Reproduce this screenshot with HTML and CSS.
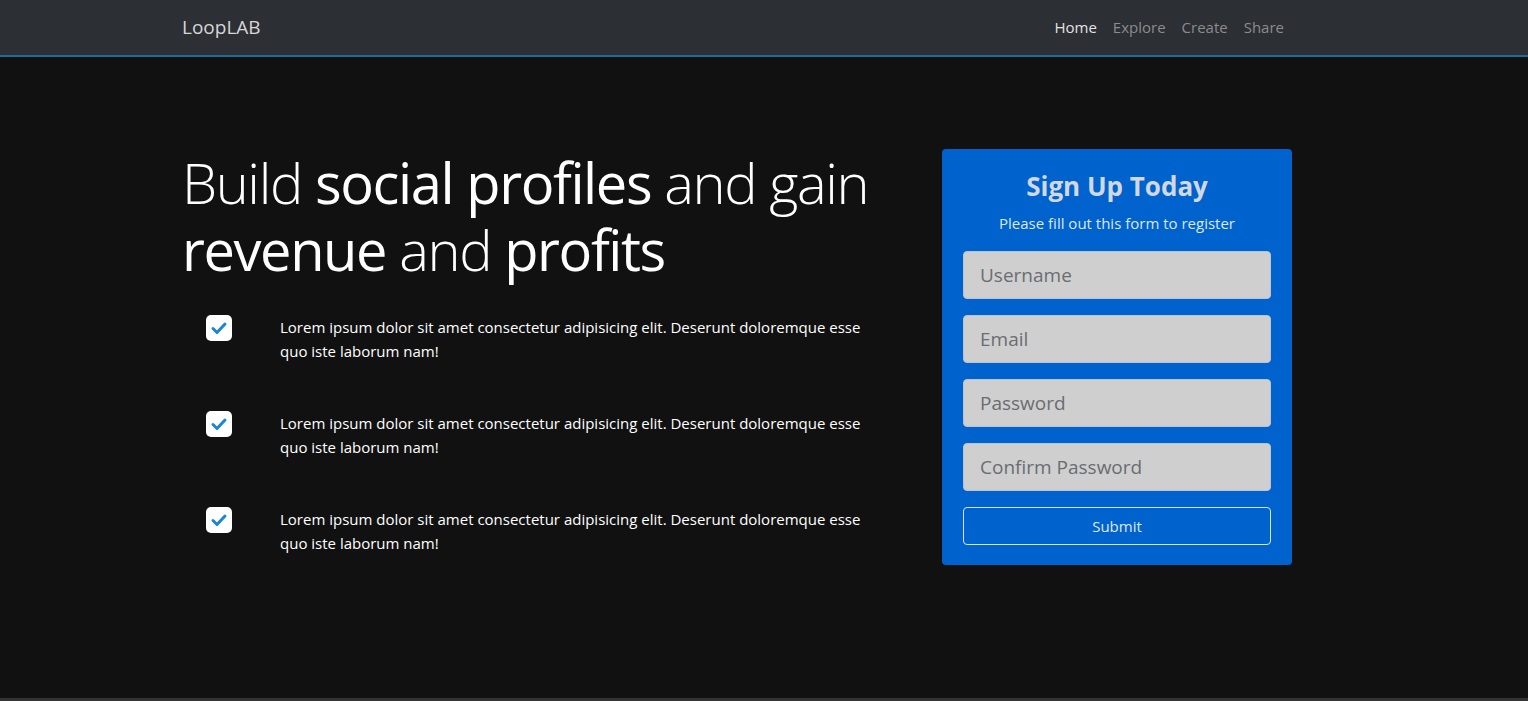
FILE: index.html
```html
<!DOCTYPE html>
<html lang="en">

<head>
  <title>LoopLAB</title>
  <meta charset="utf-8">
  <link rel="stylesheet" href="styles.css">
</head>

<body>
  <nav class="navbar">
    <div class="container nav-inner">
      <a class="brand" href="#">LoopLAB</a>
      <ul class="nav-links">
        <li><a class="active" href="#">Home</a></li>
        <li><a href="#">Explore</a></li>
        <li><a href="#">Create</a></li>
        <li><a href="#">Share</a></li>
      </ul>
    </div>
  </nav>

  <section class="home">
    <div class="container row">
      <div class="intro">
        <h1 class="display">Build <strong>social profiles</strong> and gain <strong>revenue</strong> and <strong>profits</strong></h1>
        <ul class="checks">
          <li>
            <span class="check"><svg width="26" height="26" viewBox="0 0 26 26"><rect width="26" height="26" rx="5" fill="#fff"/><path d="M7 13.5l4 4 8-8.5" fill="none" stroke="#1a87cf" stroke-width="3" stroke-linecap="round" stroke-linejoin="round"/></svg></span>
            <p>Lorem ipsum dolor sit amet consectetur adipisicing elit. Deserunt doloremque esse quo iste laborum nam!</p>
          </li>
          <li>
            <span class="check"><svg width="26" height="26" viewBox="0 0 26 26"><rect width="26" height="26" rx="5" fill="#fff"/><path d="M7 13.5l4 4 8-8.5" fill="none" stroke="#1a87cf" stroke-width="3" stroke-linecap="round" stroke-linejoin="round"/></svg></span>
            <p>Lorem ipsum dolor sit amet consectetur adipisicing elit. Deserunt doloremque esse quo iste laborum nam!</p>
          </li>
          <li>
            <span class="check"><svg width="26" height="26" viewBox="0 0 26 26"><rect width="26" height="26" rx="5" fill="#fff"/><path d="M7 13.5l4 4 8-8.5" fill="none" stroke="#1a87cf" stroke-width="3" stroke-linecap="round" stroke-linejoin="round"/></svg></span>
            <p>Lorem ipsum dolor sit amet consectetur adipisicing elit. Deserunt doloremque esse quo iste laborum nam!</p>
          </li>
        </ul>
      </div>

      <div class="card">
        <h3>Sign Up Today</h3>
        <p>Please fill out this form to register</p>
        <form>
          <input type="text" placeholder="Username">
          <input type="email" placeholder="Email">
          <input type="password" placeholder="Password">
          <input type="password" placeholder="Confirm Password">
          <button type="button">Submit</button>
        </form>
      </div>
    </div>
  </section>

  <footer class="footer"></footer>
</body>

</html>
```

FILE: styles.css
```css
* {
  box-sizing: border-box;
}

body {
  margin: 0;
  background-color: #111;
  color: #fff;
  font-family: "Open Sans", "Noto Sans", sans-serif;
  font-size: 16px;
  line-height: 1.5;
}

.container {
  width: 1110px;
  margin-left: 182px;
}

/* top bar */
.navbar {
  height: 57px;
  background-color: #2c2f33;
  border-bottom: 2px solid #1d6b98;
}

.nav-inner {
  height: 55px;
  display: flex;
  align-items: center;
  justify-content: space-between;
}

.brand {
  font-size: 19px;
  color: #d6d6d6;
  text-decoration: none;
}

.nav-links {
  display: flex;
  list-style: none;
  margin: 0;
  padding: 0;
}

.nav-links a {
  display: block;
  padding: 0 8px;
  font-size: 15px;
  color: #8a8c8f;
  text-decoration: none;
}

.nav-links a.active {
  color: #e2e2e2;
}

/* main section */
.home {
  padding-top: 92px;
  min-height: 641px;
}

.row {
  display: flex;
  justify-content: space-between;
  align-items: flex-start;
}

.intro {
  width: 730px;
}

.display {
  margin: 0 0 32px;
  font-size: 56px;
  font-weight: 300;
  line-height: 1.2;
  letter-spacing: -1.4px;
}

.display strong {
  font-weight: 400;
}

.checks {
  list-style: none;
  margin: 0;
  padding: 0 0 0 24px;
}

.checks li {
  display: flex;
  align-items: flex-start;
  gap: 48px;
  margin-bottom: 48px;
}

.check {
  display: block;
  width: 26px;
  height: 26px;
  flex: none;
}

.check svg {
  display: block;
}

.checks p {
  margin: 0;
  width: 600px;
  font-size: 15px;
  line-height: 24px;
}

/* sign up card */
.card {
  width: 350px;
  padding: 21px 21px 20px;
  background-color: #0062cc;
  border-radius: 4px;
  text-align: center;
}

.card h3 {
  margin: 0 0 8px;
  font-size: 26px;
  font-weight: 700;
  line-height: 1.3;
  color: #d2d8e2;
}

.card p {
  margin: 0 0 17px;
  font-size: 15px;
  color: #dfe6ef;
}

.card input {
  display: block;
  width: 100%;
  height: 48px;
  margin-bottom: 16px;
  padding: 0 16px;
  background-color: #cfcfcf;
  border: 1px solid #b9c4d2;
  border-radius: 4px;
  font-family: inherit;
  font-size: 19px;
  color: #333;
}

.card input::placeholder {
  color: #6a6d71;
}

.card button {
  display: block;
  width: 100%;
  height: 38px;
  background: transparent;
  border: 1px solid #d7e6f7;
  border-radius: 4px;
  font-family: inherit;
  font-size: 15px;
  color: #dde8f5;
}

.footer {
  height: 3px;
  background-color: #333;
}
```
